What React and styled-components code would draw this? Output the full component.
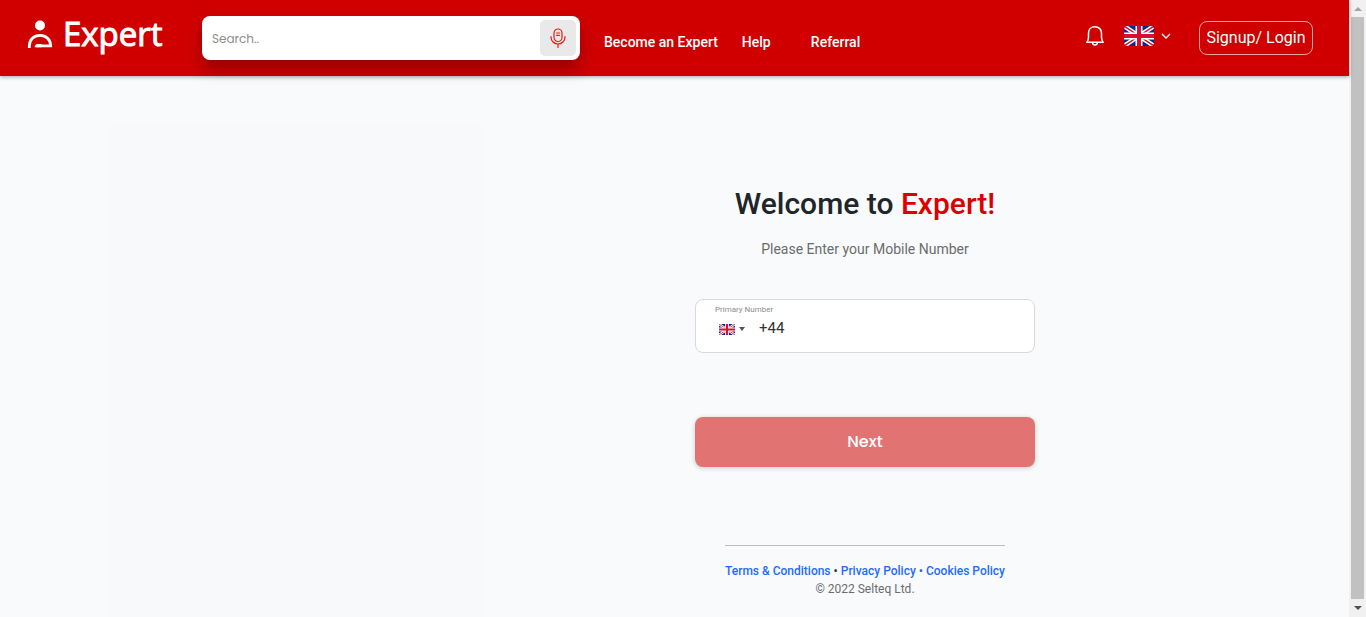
import React from "react";
import styled, { createGlobalStyle } from "styled-components";

const GlobalStyle = createGlobalStyle`
  *, *::before, *::after { box-sizing: border-box; }
  body { margin: 0; background: #f8fafc; font-family: Roboto, "Liberation Sans", sans-serif; color: #212529; overflow: hidden; }
  button, input { font: inherit; }
  h1, p { margin: 0; }
  svg { display: block; flex: none; }
`;

const Shell = styled.div`
  display: flex;
  height: 100vh;
  overflow: hidden;
`;

const Page = styled.div`
  flex: 1;
  min-width: 0;
  display: flex;
  flex-direction: column;
`;

const Header = styled.header`
  position: relative;
  display: flex;
  align-items: center;
  height: 76px;
  flex: none;
  padding: 0 36px 0 27px;
  background: #d00000;
  color: #fff;
  box-shadow: 0 1px 4px rgba(0, 0, 0, 0.35);
`;

const Logo = styled.a`
  display: flex;
  align-items: center;
  gap: 10px;
  width: 175px;
  flex: none;
  padding-bottom: 8px;
  color: #fff;
  text-decoration: none;
  font: 500 33px/44px "Open Sans", "Noto Sans", sans-serif;
  -webkit-text-stroke: 1px #fff;
`;

const Search = styled.form`
  display: flex;
  align-items: center;
  flex: 0 1 378px;
  height: 44px;
  padding: 4px;
  border-radius: 8px;
  background: #fff;
  box-shadow: 0 10px 15px rgba(0, 0, 0, 0.25);
`;

const SearchInput = styled.input`
  flex: 1;
  min-width: 0;
  border: 0;
  outline: 0;
  padding: 2px 6px 0;
  background: transparent;
  font: 12px/20px Poppins, Inter, sans-serif;
  &::placeholder { color: #8e8e8e; opacity: 1; }
`;

const MicButton = styled.button`
  display: grid;
  place-items: center;
  width: 36px;
  height: 36px;
  padding: 0;
  border: 0;
  border-radius: 5px;
  background: #e9e9e9;
  color: #f01818;
`;

const Nav = styled.nav`
  display: flex;
  padding: 8px 0 0 24px;
`;

const NavLink = styled.a`
  min-width: ${(p) => (p.$wide ? "69px" : "0")};
  margin-right: ${(p) => (p.$wide ? "0" : "24px")};
  color: #fff;
  text-decoration: none;
  white-space: nowrap;
  font-size: 14px;
  line-height: 20px;
  font-weight: 500;
`;

const Actions = styled.div`
  display: flex;
  align-items: center;
  margin-left: auto;
`;

const IconButton = styled.button`
  display: flex;
  align-items: center;
  gap: 7px;
  margin-right: ${(p) => p.$gap};
  padding: 0 0 4px;
  border: 0;
  background: none;
  color: #fff;
`;

const LoginButton = styled.button`
  width: 114px;
  height: 34px;
  padding: 0;
  border: 1px solid #e6a5a5;
  border-radius: 8px;
  background: transparent;
  color: #fff;
  font-size: 16px;
  line-height: 24px;
  white-space: nowrap;
`;

const Main = styled.main`
  display: flex;
  flex: 1;
  width: 100%;
  max-width: 1137px;
  margin: 0 auto;
`;

const Artwork = styled.div`
  flex: 0 0 33.33%;
  margin-top: 49px;
  border-radius: 8px 8px 0 0;
  background: #f8f9fb;
`;

const Panel = styled.section`
  flex: 1;
  display: flex;
  flex-direction: column;
  align-items: center;
  padding: 108px 0 0 2px;
`;

const Title = styled.h1`
  font-size: 30px;
  line-height: 40px;
  font-weight: 500;
  white-space: nowrap;
  span { color: #dc0000; }
`;

const Subtitle = styled.p`
  margin-top: 15px;
  font-size: 14px;
  line-height: 20px;
  color: #6c6c6c;
`;

const Form = styled.form`
  display: flex;
  flex-direction: column;
  width: 340px;
  margin-top: 40px;
`;

const PhoneField = styled.div`
  height: 54px;
  padding: 5px 19px;
  border: 1px solid #d9d9dc;
  border-radius: 8px;
  background: #fff;
`;

const PhoneLabel = styled.label`
  display: block;
  font-size: 8px;
  line-height: 10px;
  color: #8d8d8d;
`;

const PhoneRow = styled.div`
  display: flex;
  align-items: center;
  height: 26px;
`;

const CountryButton = styled.button`
  display: flex;
  align-items: center;
  gap: 4px;
  padding: 2px 0 0 4px;
  border: 0;
  background: none;
  color: #555;
`;

const PhoneInput = styled.input`
  flex: 1;
  min-width: 0;
  margin-left: 14px;
  padding: 0;
  border: 0;
  outline: 0;
  background: transparent;
  color: #333;
  font-size: 15px;
  line-height: 20px;
`;

const NextButton = styled.button`
  height: 50px;
  margin-top: 64px;
  border: 0;
  border-radius: 8px;
  background: #e27373;
  color: #fff;
  font: 500 16px/24px Poppins, Inter, sans-serif;
  box-shadow: 0 1px 5px rgba(0, 0, 0, 0.2);
`;

const Legal = styled.footer`
  margin-top: 78px;
  padding-top: 16px;
  border-top: 1px solid #bdbdc0;
  text-align: center;
  font-size: 12px;
  line-height: 18px;
  color: #6c6c6c;
`;

const LegalLinks = styled.p`
  font-weight: 500;
  color: #333;
  white-space: nowrap;
`;

const LegalLink = styled.a`
  color: #1f6bff;
  text-decoration: none;
`;

const Scrollbar = styled.div`
  display: flex;
  flex-direction: column;
  align-items: center;
  flex: none;
  width: 17px;
  background: #f1f1f1;
`;

const ScrollArrow = styled.span`
  display: grid;
  place-items: center;
  height: ${(p) => (p.$end ? "18px" : "17px")};
  color: ${(p) => (p.$end ? "#505050" : "#a3a3a3")};
`;

const ScrollThumb = styled.div`
  flex: 1;
  width: 13px;
  background: #c1c1c1;
`;

function UkFlag({ width, height, radius = 0 }) {
  const id = `flag-${width}`;
  return (
    <svg width={width} height={height} viewBox="0 0 30 20" preserveAspectRatio="none" aria-hidden="true">
      <clipPath id={id}>
        <rect width="30" height="20" rx={radius} />
      </clipPath>
      <g clipPath={`url(#${id})`}>
        <rect width="30" height="20" fill="#0a2a83" />
        <path d="M0 0 30 20M30 0 0 20" stroke="#fff" strokeWidth="4.4" />
        <path d="M0 0 12 8M30 20 18 12M30 0 18 8M0 20 12 12" stroke="#d80f30" strokeWidth="1.5" />
        <path d="M15 0V20M0 10H30" stroke="#fff" strokeWidth="7" />
        <path d="M15 0V20M0 10H30" stroke="#d80f30" strokeWidth="4" />
      </g>
    </svg>
  );
}

function LogoMark() {
  return (
    <svg width="26" height="28" viewBox="0 0 26 28" aria-hidden="true">
      <circle cx="13" cy="5.500" r="5" fill="#fff" />
      <path d="M2.300 28V26C2.300 19.500 7 15.300 13 15.300s10.700 4.200 10.700 10.600H9.500" fill="none" stroke="#fff" strokeWidth="2.800" />
      <path d="M7.500 27.300c.3-2.200 1.600-3.400 4-3.400h3v3.400Z" fill="#fff" />
    </svg>
  );
}

function MicIcon() {
  return (
    <svg width="16" height="20" viewBox="0 0 16 20" fill="none" stroke="currentColor" strokeWidth="1.2" strokeLinecap="round" aria-hidden="true">
      <rect x="4" y="1" width="8" height="12.500" rx="4" />
      <path d="M1 8.500V9c0 4 3 7 7 7s7-3 7-7v-.5M8 16v3.400M6.500 5h3M6.500 7.300h3" />
    </svg>
  );
}

function BellIcon() {
  return (
    <svg width="18" height="20" viewBox="0 0 18 20" fill="none" stroke="currentColor" strokeWidth="1.500" strokeLinecap="round" strokeLinejoin="round" aria-hidden="true">
      <path d="M9 .8C5 .8 2.500 3.600 2.500 7v4.500c0 2-.5 3-1.700 4.800h16.400c-1.200-1.800-1.700-2.800-1.700-4.800V7C15.500 3.600 13 .8 9 .8Z" />
      <path d="M6.500 16.500c.2 1.700 1.100 2.600 2.500 2.600s2.300-.9 2.500-2.600" />
    </svg>
  );
}

function Triangle({ width, height, up }) {
  return (
    <svg width={width} height={height} viewBox="0 0 8 4" preserveAspectRatio="none" fill="currentColor" aria-hidden="true">
      <path d={up ? "M0 4 4 0 8 4Z" : "M0 0H8L4 4Z"} />
    </svg>
  );
}

export default function App() {
  return (
    <Shell>
      <GlobalStyle />
      <Page>
        <Header>
          <Logo href="#home">
            <LogoMark />
            Expert
          </Logo>
          <Search role="search" onSubmit={(e) => e.preventDefault()}>
            <SearchInput type="text" placeholder="Search.." aria-label="Search" />
            <MicButton type="button" aria-label="Voice search">
              <MicIcon />
            </MicButton>
          </Search>
          <Nav>
            <NavLink href="#become">Become an Expert</NavLink>
            <NavLink href="#help" $wide>Help</NavLink>
            <NavLink href="#referral">Referral</NavLink>
          </Nav>
          <Actions>
            <IconButton type="button" aria-label="Notifications" $gap="20px">
              <BellIcon />
            </IconButton>
            <IconButton type="button" aria-label="Language" $gap="28px">
              <UkFlag width={30} height={20} radius={4} />
              <svg width="10" height="6" viewBox="0 0 10 6" fill="none" stroke="currentColor" strokeWidth="1.300" aria-hidden="true">
                <path d="m1 1 4 4 4-4" />
              </svg>
            </IconButton>
            <LoginButton type="button">Signup/ Login</LoginButton>
          </Actions>
        </Header>
        <Main>
          <Artwork />
          <Panel>
            <Title>
              Welcome to <span>Expert!</span>
            </Title>
            <Subtitle>Please Enter your Mobile Number</Subtitle>
            <Form onSubmit={(e) => e.preventDefault()}>
              <PhoneField>
                <PhoneLabel htmlFor="phone">Primary Number</PhoneLabel>
                <PhoneRow>
                  <CountryButton type="button" aria-label="Country code">
                    <UkFlag width={16} height={11} />
                    <Triangle width={6} height={4} />
                  </CountryButton>
                  <PhoneInput id="phone" type="tel" defaultValue="+44" />
                </PhoneRow>
              </PhoneField>
              <NextButton type="submit">Next</NextButton>
            </Form>
            <Legal>
              <LegalLinks>
                <LegalLink href="#terms">Terms &amp; Conditions</LegalLink> •{" "}
                <LegalLink href="#privacy">Privacy Policy •</LegalLink>{" "}
                <LegalLink href="#cookies">Cookies Policy</LegalLink>
              </LegalLinks>
              <p>© 2022 Selteq Ltd.</p>
            </Legal>
          </Panel>
        </Main>
      </Page>
      <Scrollbar aria-hidden="true">
        <ScrollArrow>
          <Triangle width={8} height={4} up />
        </ScrollArrow>
        <ScrollThumb />
        <ScrollArrow $end>
          <Triangle width={8} height={4} />
        </ScrollArrow>
      </Scrollbar>
    </Shell>
  );
}
